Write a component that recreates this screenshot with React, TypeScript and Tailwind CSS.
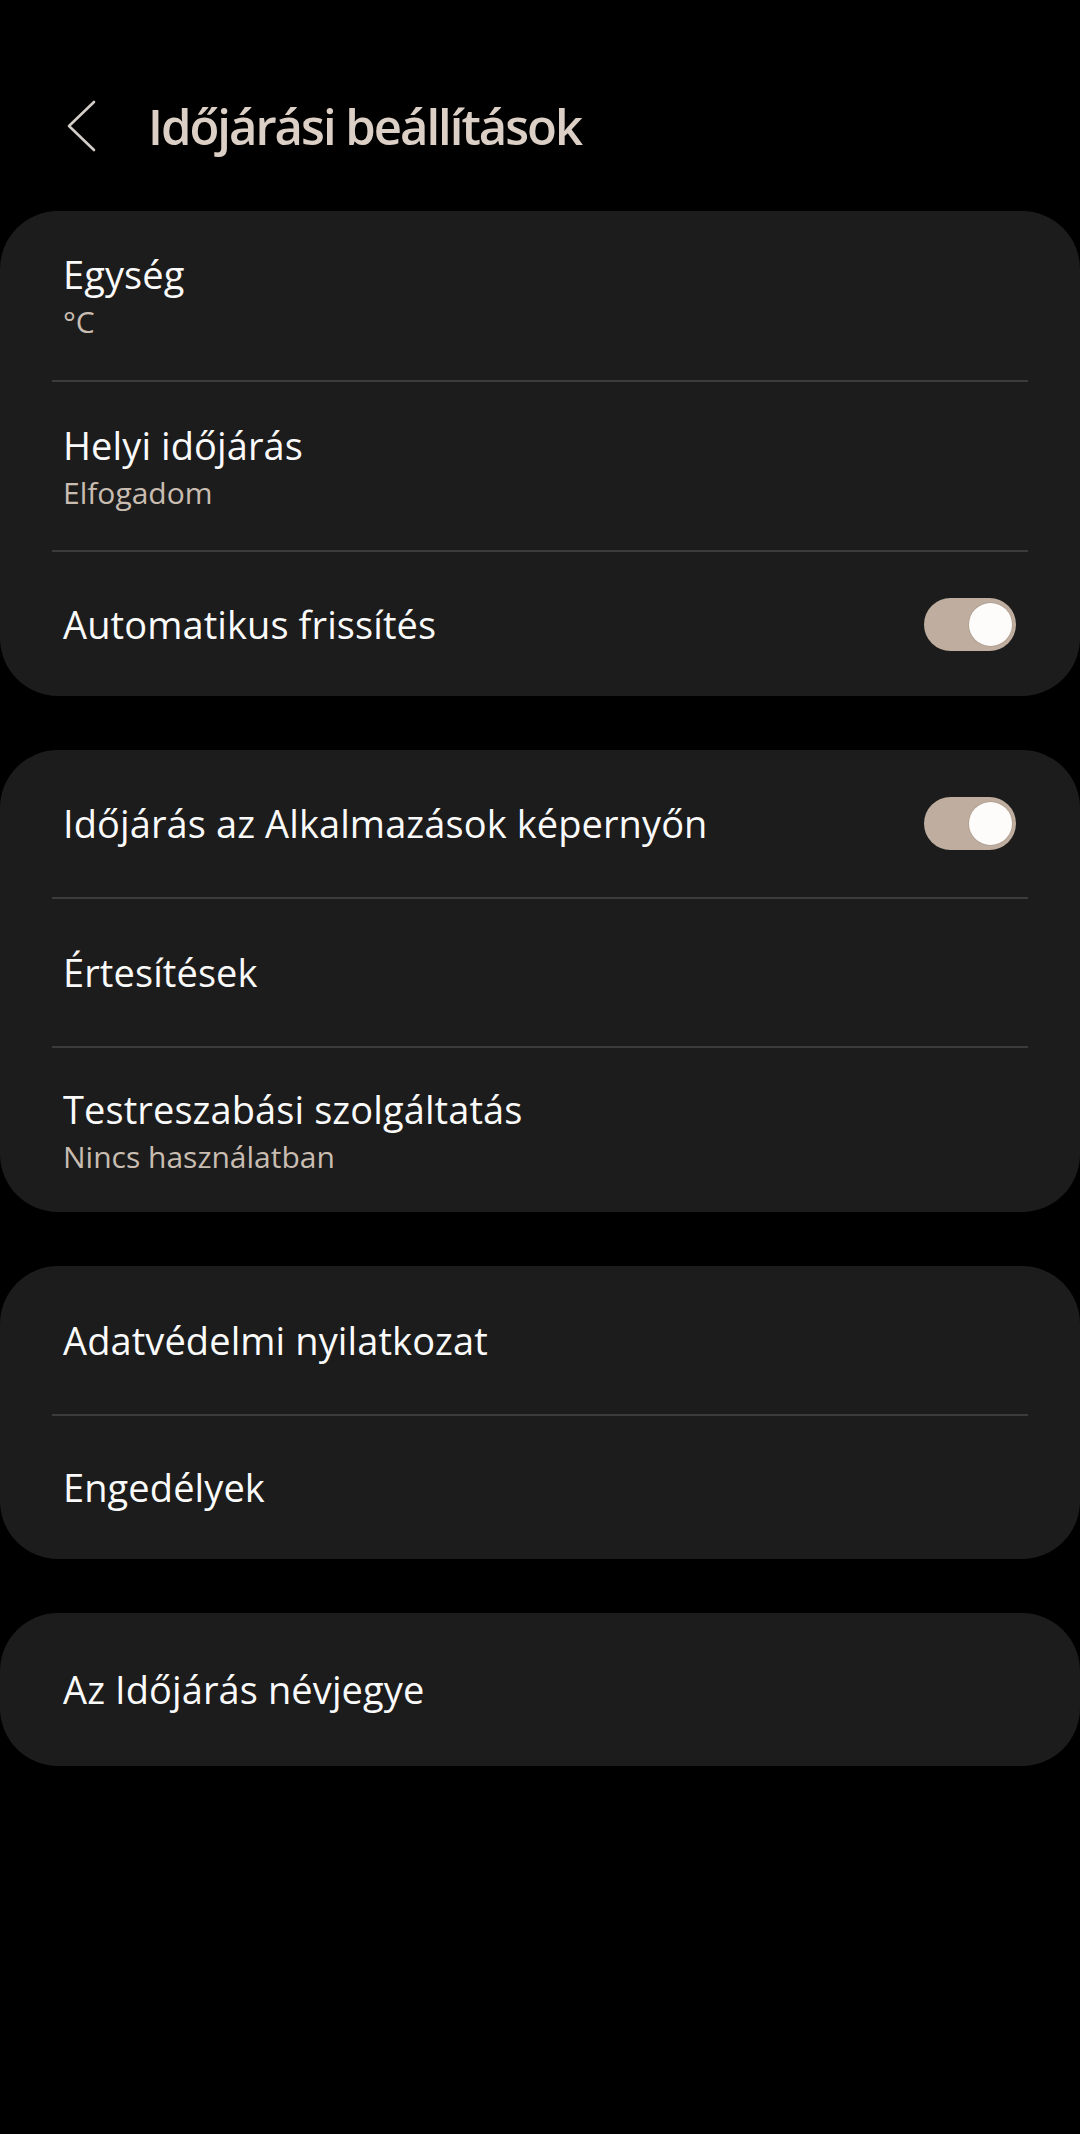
import React from "react";

function Toggle() {
  return (
    <div className="relative h-[53px] w-[92px] rounded-full bg-[#bfae9f] shrink-0">
      <div className="absolute right-[4px] top-[5px] h-[43px] w-[43px] rounded-full bg-[#fefcfa] shadow-[0_0_0_1px_#b3a293]" />
    </div>
  );
}

function Divider() {
  return <div className="mx-[52px] h-[2px] bg-[#3c3c3c]" />;
}

type RowProps = { title: string; sub?: string; toggle?: boolean; h: string };

function Row({ title, sub, toggle, h }: RowProps) {
  return (
    <div className={`flex items-center justify-between pl-[63px] pr-[64px] ${h}`}>
      <div className="flex flex-col">
        <div className="text-[38px] leading-[51px] tracking-[0.1px] text-[#fafafa]">{title}</div>
        {sub && <div className="mt-[2px] text-[30px] leading-[40px] text-[#c9bdb2]">{sub}</div>}
      </div>
      {toggle && <Toggle />}
    </div>
  );
}

export default function App() {
  return (
    <div className="min-h-[2134px] w-[1080px] bg-black pt-[66px] font-['Open_Sans',sans-serif]">
      <div className="flex h-[120px] items-center">
        <svg className="ml-[66px]" width="30" height="52" viewBox="0 0 30 52" fill="none">
          <path d="M28 2 L3 26 L28 50" stroke="#d3cdc7" strokeWidth="2.6" strokeLinecap="round" strokeLinejoin="round" />
        </svg>
        <div className="ml-[52px] text-[49px] font-semibold leading-[60px] tracking-[-2px] text-[#dccfc5]">Időjárási beállítások</div>
      </div>

      <div className="mt-[25px] flex flex-col gap-[54px]">
        <div className="overflow-hidden rounded-[58px] bg-[#1c1c1c]">
          <Row title="Egység" sub="°C" h="h-[169px]" />
          <Divider />
          <Row title="Helyi időjárás" sub="Elfogadom" h="h-[168px]" />
          <Divider />
          <Row title="Automatikus frissítés" toggle h="h-[144px]" />
        </div>

        <div className="overflow-hidden rounded-[58px] bg-[#1c1c1c]">
          <Row title="Időjárás az Alkalmazások képernyőn" toggle h="h-[147px]" />
          <Divider />
          <Row title="Értesítések" h="h-[147px]" />
          <Divider />
          <Row title="Testreszabási szolgáltatás" sub="Nincs használatban" h="h-[164px]" />
        </div>

        <div className="overflow-hidden rounded-[58px] bg-[#1c1c1c]">
          <Row title="Adatvédelmi nyilatkozat" h="h-[148px]" />
          <Divider />
          <Row title="Engedélyek" h="h-[143px]" />
        </div>

        <div className="overflow-hidden rounded-[58px] bg-[#1c1c1c]">
          <Row title="Az Időjárás névjegye" h="h-[153px]" />
        </div>
      </div>
    </div>
  );
}
